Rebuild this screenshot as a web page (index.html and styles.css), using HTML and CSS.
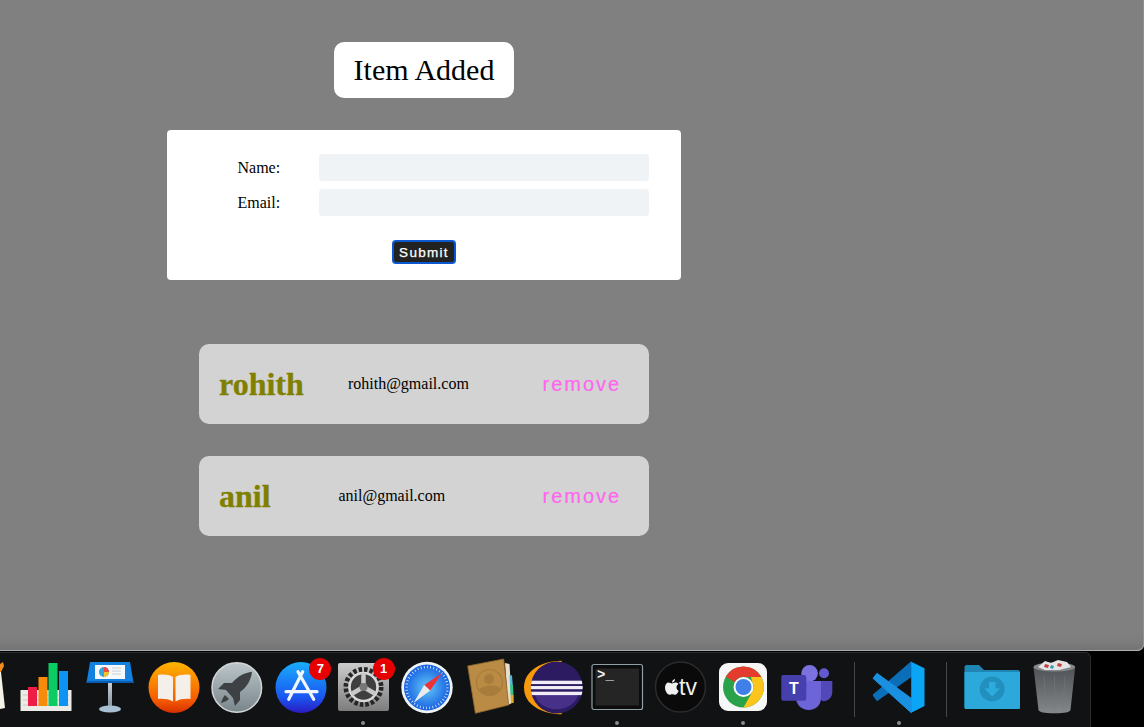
FILE: index.html
```html
<!DOCTYPE html>
<html lang="en">
<head>
<meta charset="utf-8">
<title>Item Added</title>
<link rel="stylesheet" href="styles.css">
</head>
<body>
<main class="window">
  <div class="column">
    <div class="toast">Item Added</div>
    <form class="form">
      <div class="row"><label class="label">Name:</label><div class="input"></div></div>
      <div class="row"><label class="label">Email:</label><div class="input"></div></div>
      <div class="actions"><button type="button" class="submit">Submit</button></div>
    </form>
    <div class="cards">
      <div class="card"><span class="name">rohith</span><span class="email">rohith@gmail.com</span><span class="remove">remove</span></div>
      <div class="card"><span class="name">anil</span><span class="email">anil@gmail.com</span><span class="remove">remove</span></div>
    </div>
  </div>
</main>
<footer class="dock">
  <div class="cell cell-cut">
    <svg width="8" height="62" viewBox="0 0 8 62"><path d="M0 6 L3 4 L4 8 L1 14 L0 14Z" fill="#f28a1e"/><path d="M0 14 L1 14 L5 50 L0 51Z" fill="#f4f1e6"/></svg>
  </div>
  <div class="cell">
    <svg width="63" height="62" viewBox="0 0 63 62"><rect x="5.500" y="32" width="51" height="21" fill="#ecebe6"/><path d="M8 37h46M8 42h46M8 47h46" stroke="#bdbdb8" stroke-width=".7"/><rect x="13" y="29" width="9" height="19" fill="#ef1c45"/><rect x="23.500" y="19" width="9" height="29" fill="#fa8a0a"/><rect x="33.500" y="5" width="9" height="43" fill="#0ccb63"/><rect x="44" y="13" width="9" height="35" fill="#0c93f4"/></svg>
  </div>
  <div class="cell">
    <svg width="63" height="62" viewBox="0 0 63 62"><defs><linearGradient id="kn" x1="0" y1="0" x2="0" y2="1"><stop offset="0" stop-color="#c9d1d8"/><stop offset="1" stop-color="#8a96a0"/></linearGradient></defs><rect x="29" y="24" width="4" height="24" fill="url(#kn)"/><ellipse cx="31" cy="51" rx="11" ry="3.600" fill="#a9c0d4"/><path d="M11 4H51L54.500 25H7.500Z" fill="#1281e0"/><rect x="7.500" y="23" width="47" height="2" fill="#0a5cb0"/><rect x="16" y="7" width="30" height="14" fill="#f6f8fa"/><circle cx="25" cy="14" r="5" fill="#2fa6df"/><path d="M25 14V9A5 5 0 0 1 30 14Z" fill="#ef4b3d"/><path d="M25 14H30A5 5 0 0 1 25 19Z" fill="#f5c22b"/><path d="M33 10h9M33 13h9M33 16h9" stroke="#c9ced4" stroke-width="1"/></svg>
  </div>
  <div class="cell">
    <svg width="63" height="62" viewBox="0 0 63 62"><defs><linearGradient id="bk" x1="0" y1="0" x2="0" y2="1"><stop offset="0" stop-color="#ffb400"/><stop offset=".75" stop-color="#f55a00"/><stop offset="1" stop-color="#d53000"/></linearGradient></defs><circle cx="32" cy="29.500" r="25.500" fill="url(#bk)"/><path d="M31 19C27 16.500 21 16 16 17V41C21 40.500 27 41 31 43.500Z" fill="#f4efe8"/><path d="M33.500 19C37.500 16.500 43.500 16 48.500 17V41C43.500 40.500 37.500 41 33.500 43.500Z" fill="#f4efe8"/></svg>
  </div>
  <div class="cell">
    <svg width="63" height="62" viewBox="0 0 63 62"><defs><linearGradient id="lp" x1="0" y1="0" x2="0" y2="1"><stop offset="0" stop-color="#bcc6cb"/><stop offset="1" stop-color="#78858b"/></linearGradient></defs><circle cx="31.800" cy="29.500" r="24.800" fill="url(#lp)" stroke="#d2d6d8" stroke-width="1.500"/><path d="M47 14C40 14.500 33 18 27 25L19 25L13 31L21 32L28 40L30 48L35 42L35 34C42 29 46 22 47 14Z" fill="#3d4144"/><path d="M20 37C18 39 17 42 16 45C19 44 22 43 24 41Z" fill="#3d4144"/></svg>
  </div>
  <div class="cell has-badge">
    <svg width="63" height="62" viewBox="0 0 63 62"><defs><linearGradient id="as" x1="0" y1="0" x2="0" y2="1"><stop offset="0" stop-color="#18aefc"/><stop offset=".7" stop-color="#1a55f0"/><stop offset="1" stop-color="#2b1bc0"/></linearGradient></defs><circle cx="32" cy="29.500" r="25.500" fill="url(#as)"/><path d="M33.700 13.700L19.700 41.300M29 13.700L44.700 41.300M17 33.700H48" stroke="#f2f5fb" stroke-width="3.200" stroke-linecap="round" fill="none"/></svg>
    <span class="badge">7</span>
  </div>
  <div class="cell has-badge dot">
    <svg width="63" height="62" viewBox="0 0 63 62"><defs><linearGradient id="sp" x1="0" y1="0" x2="0" y2="1"><stop offset="0" stop-color="#cccccc"/><stop offset="1" stop-color="#7d7d7d"/></linearGradient></defs><rect x="6" y="5" width="51" height="48" rx="2" fill="url(#sp)"/><circle cx="31.500" cy="29" r="17.500" fill="none" stroke="#262626" stroke-width="5" stroke-dasharray="3.500 2"/><circle cx="31.500" cy="29" r="14" fill="#3f3f3f" stroke="#d8d8d8" stroke-width="2.600"/><path d="M31.500 29V15M31.500 29L19.500 36M31.500 29L43.500 36" stroke="#c9c9c9" stroke-width="4.500"/><circle cx="31.500" cy="29" r="4" fill="#777"/></svg>
    <span class="badge">1</span>
  </div>
  <div class="cell">
    <svg width="63" height="62" viewBox="0 0 63 62"><defs><radialGradient id="sf"><stop offset="0" stop-color="#62c8f8"/><stop offset="1" stop-color="#1760e2"/></radialGradient></defs><circle cx="32" cy="29.500" r="25.700" fill="#eef3f6"/><circle cx="32" cy="29.500" r="23" fill="url(#sf)"/><circle cx="32" cy="29.500" r="20.500" fill="none" stroke="#dbeefc" stroke-width="2.500" stroke-dasharray=".8 2.400"/><path d="M47 15L35.200 32.500L29.200 27Z" fill="#f0303a"/><path d="M18.500 45L29.200 27L35.200 32.500Z" fill="#e9ecee"/></svg>
  </div>
  <div class="cell">
    <svg width="63" height="62" viewBox="0 0 63 62"><path d="M46 5L50.500 6L53 45L49 47Z" fill="#e6dfcc"/><path d="M50.500 17L53 17.500L53.800 27L51 27Z" fill="#55b6d8"/><path d="M51 27L54 27L54.500 37L51.500 37Z" fill="#36c48a"/><path d="M51.500 37L54.700 37L54.700 45L52 45Z" fill="#e4a72c"/><path d="M8.700 8L44.700 1L49.700 47L16.400 55.300Z" fill="#b98b45" stroke="#94692d" stroke-width=".8"/><circle cx="30.500" cy="24.500" r="13" fill="none" stroke="#a87c3b" stroke-width="1.200"/><circle cx="30" cy="21" r="5" fill="#a87c3b"/><path d="M20 32C23 27 37 26 41 30C39 39 25 40 20 32Z" fill="#a87c3b"/></svg>
  </div>
  <div class="cell">
    <svg width="63" height="62" viewBox="0 0 63 62"><defs><clipPath id="ec"><circle cx="34.700" cy="29.500" r="26"/></clipPath></defs><path d="M39.700 2.700C20 3 2 12 2 29.500C2 47 20 56 39.700 56.300Z" fill="#f79a0a"/><circle cx="34.700" cy="29.500" r="26" fill="#2d1b62"/><path d="M13 37A22 18 0 0 0 56 37Z" fill="#473088"/><g clip-path="url(#ec)" fill="#f1edf7"><rect x="8" y="22.700" width="53" height="3.400"/><rect x="8" y="28" width="53" height="3.200"/><rect x="8" y="33.700" width="53" height="3.400"/></g></svg>
  </div>
  <div class="cell dot">
    <svg width="63" height="62" viewBox="0 0 63 62"><rect x="7" y="6.500" width="50.500" height="45" rx="2" fill="#0c0c0c" stroke="#8ea0a6" stroke-width="1.200"/><rect x="10.500" y="10.500" width="43.500" height="37" fill="#252525"/><text class="term" x="12" y="21">&gt;_</text></svg>
  </div>
  <div class="cell">
    <svg width="63" height="62" viewBox="0 0 63 62"><circle cx="31.500" cy="29" r="25" fill="#0a0a0a" stroke="#2c2c2c" stroke-width="1.500"/><path d="M19.200 24.500C21 24.500 22 25.500 23 25.500C24 25.500 25 24.500 26.500 24.500C27.800 24.500 28.800 25 29.500 26C28 27 27.500 28 27.500 29.500C27.500 31 28.300 32 29.700 32.800C29 34.800 27.500 36.800 26 36.800C25 36.800 24.500 36.200 23.300 36.200C22 36.200 21.500 36.800 20.500 36.800C18.500 36.800 16 33 16 29.800C16 26.500 17.800 24.500 19.200 24.500ZM23 24.500C23 22.700 24.400 21.200 26 21C26.200 22.800 24.700 24.500 23 24.500Z" fill="#f0f0f0"/><text class="tv" x="30" y="36.500">tv</text></svg>
  </div>
  <div class="cell dot">
    <svg width="63" height="62" viewBox="0 0 63 62"><rect x="7" y="5" width="48" height="48" rx="9" fill="#f7f7f7"/><circle cx="31.500" cy="29" r="20.500" fill="#29a24a"/><path d="M31.500 8.500A20.500 20.500 0 0 1 49.300 19H31.500A10 10 0 0 0 22.800 24L13.700 18.800A20.500 20.500 0 0 1 31.500 8.500Z" fill="#e33b2e"/><path d="M49.300 19A20.500 20.500 0 0 1 31.500 49.500L40.200 34A10 10 0 0 0 40.200 24L39 19Z" fill="#fbc51b"/><circle cx="31.500" cy="29" r="10" fill="#fff"/><circle cx="31.500" cy="29" r="8" fill="#3f7fe8"/></svg>
  </div>
  <div class="cell">
    <svg width="63" height="62" viewBox="0 0 63 62"><circle cx="49" cy="15.300" r="5" fill="#6259cf"/><path d="M41 23H57.300V34C57.300 40 52 44 47 43L41 34Z" fill="#5248b8"/><circle cx="34.600" cy="15.300" r="8.300" fill="#7b72e0"/><path d="M21 23H46V40C46 48 40 52 33.500 52C27 52 21 47 21 40Z" fill="#6d64da"/><rect x="6.300" y="17" width="25" height="25.700" rx="2" fill="#4540ad"/><text class="teams" x="18.800" y="35.500">T</text></svg>
  </div>
  <div class="divider divider-a"></div>
  <div class="cell dot">
    <svg width="63" height="62" viewBox="0 0 63 62"><path d="M44.200 3.700L6 37L10 42.700L44.200 18.700Z" fill="#0a6fb8" stroke="#0a6fb8" stroke-linejoin="round"/><path d="M44.200 54.700L6 20.300L10 15.300L44.200 40.300Z" fill="#1a90e0" stroke="#1a90e0" stroke-linejoin="round"/><path d="M44.200 3.700L57.500 10.300V48L44.200 54.700Z" fill="#0aa5f5"/></svg>
  </div>
  <div class="divider divider-b"></div>
  <div class="cell">
    <svg width="63" height="62" viewBox="0 0 63 62"><path d="M4.500 9C4.500 8 5.500 7 6.500 7H19L24 12H58C59 12 60 13 60 14V49C60 51 59 51 58 51H6.500C5 51 4.500 50.500 4.500 49Z" fill="#1f86b4"/><path d="M4.500 14H60V49C60 51 59 51 58 51H6.500C5 51 4.500 50.500 4.500 49Z" fill="#2ca9da"/><circle cx="32.200" cy="31" r="12.500" fill="#2290bf"/><path d="M29 24H35.500V30.500H40L32.200 38.500L24.500 30.500H29Z" fill="#2cabdc"/></svg>
  </div>
  <div class="cell">
    <svg width="63" height="62" viewBox="0 0 63 62"><defs><linearGradient id="tr" x1="0" y1="0" x2="0" y2="1"><stop offset="0" stop-color="#4f5256"/><stop offset="1" stop-color="#85888a"/></linearGradient></defs><path d="M10.500 9L52.200 9L47.500 52C47 54 42 55.300 31.500 55.300C21 55.300 16 54 15.500 52Z" fill="url(#tr)"/><path d="M21 18L23 50M31.500 18V51M42 18L40 50" stroke="#74777a" stroke-width=".6"/><ellipse cx="31.300" cy="9" rx="20.800" ry="4.500" fill="#85888b"/><path d="M15 9L22 3L28 5L35 2L44 4L48 9L36 12H22Z" fill="#e5e5e5"/><path d="M22 6l4 1l-1 3l-4 -1zM35 5l4 1l-1 3l-4 -1z" fill="#c2413f"/><path d="M28 7l3 1l-1 3l-3 -1z" fill="#2e9fb0"/></svg>
  </div>
</footer>
</body>
</html>
```
FILE: styles.css
```css
* { box-sizing: border-box; }
html, body { margin: 0; padding: 0; }
body {
  width: 1144px;
  height: 727px;
  background: #000;
  overflow: hidden;
  font-family: "Liberation Serif", serif;
  color: #000;
}
.window {
  height: 651px;
  background: #808080;
  border-bottom-right-radius: 7px;
  box-shadow: inset 0 -1px 0 #aeaeae, inset -1px 0 0 #8f8f8f, inset 0 -16px 14px -12px rgba(0, 0, 0, .14);
  padding: 42px 0 0 167px;
}
.column { width: 514px; }
.toast {
  width: 180px;
  height: 56px;
  margin: 0 auto 32px;
  background: #fff;
  border-radius: 10px;
  font-size: 30px;
  line-height: 56px;
  text-align: center;
}
.form {
  height: 150px;
  background: #fff;
  border-radius: 4px;
  padding: 24px 32px 16px 71px;
}
.row {
  display: flex;
  align-items: center;
  height: 27px;
  margin-bottom: 8px;
}
.label { width: 81px; font-size: 16px; margin-left: -.5px; flex: none; }
.input {
  width: 330px;
  height: 27px;
  margin-left: .5px;
  background: #eff3f6;
  border-radius: 4px;
}
.actions {
  display: flex;
  justify-content: center;
  margin: 24px -32px 0 -71px;
}
.submit {
  width: 64px;
  height: 24px;
  padding: 0;
  background: #222;
  border: 2px solid #0b57d0;
  border-radius: 4px;
  color: #fff;
  font-family: "Liberation Sans", sans-serif;
  font-size: 13.500px;
  letter-spacing: 1.300px;
  -webkit-text-stroke: .25px #fff;
}
.cards {
  display: flex;
  flex-direction: column;
  gap: 32px;
  margin: 64px 32px 0;
}
.card {
  display: flex;
  align-items: center;
  justify-content: space-between;
  height: 80px;
  padding: 0 20px;
  background: #d3d3d3;
  border-radius: 10px;
}
.name { font-size: 32px; font-weight: bold; color: #808000; -webkit-text-stroke: .3px #808000; }
.email { font-size: 16px; }
.remove {
  width: 116px;
  padding-left: 29.500px;
  font-family: "Liberation Sans", sans-serif;
  font-size: 20px;
  letter-spacing: 2px;
  color: #ff66ee;
  -webkit-text-stroke: .2px #ff66ee;
}
.dock {
  display: flex;
  align-items: flex-start;
  width: 1091px;
  height: 75px;
  margin-top: 1px;
  padding-top: 5px;
  background: #111214;
  border: 1px solid #2b2c2e;
  border-left: 0;
  border-bottom: 0;
  border-top-right-radius: 6px;
}
.cell {
  position: relative;
  flex: 0 0 63.350px;
  height: 67px;
  display: flex;
  justify-content: center;
}
.cell svg { display: block; flex: none; }
.cell-cut { flex: 0 0 15px; justify-content: flex-start; }
.divider {
  flex: none;
  width: 1px;
  height: 55px;
  margin-top: 4px;
  background: #46474a;
}
.divider-a { margin-left: 16px; margin-right: 11.800px; }
.divider-b { margin-left: 15.500px; margin-right: 12.300px; }
.dot::after {
  content: "";
  position: absolute;
  left: 50%;
  bottom: 0;
  width: 4px;
  height: 4px;
  margin-left: -2px;
  border-radius: 50%;
  background: #8a8a8a;
}
.badge {
  position: absolute;
  top: 0;
  left: 41px;
  width: 22px;
  height: 22px;
  border-radius: 50%;
  background: #e60000;
  color: #fff;
  font-family: "Liberation Sans", sans-serif;
  font-size: 13px;
  font-weight: bold;
  line-height: 22px;
  text-align: center;
}
.term { font-family: "Liberation Mono", monospace; font-size: 14px; font-weight: bold; fill: #f2f2f2; }
.tv { font-family: "Liberation Sans", sans-serif; font-size: 23px; fill: #f0f0f0; }
.teams { font-family: "Liberation Sans", sans-serif; font-size: 16px; font-weight: bold; fill: #fff; text-anchor: middle; }
```
